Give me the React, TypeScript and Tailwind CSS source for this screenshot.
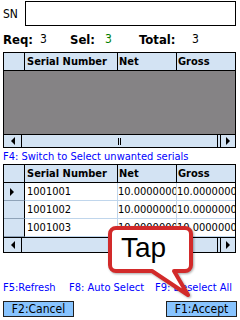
import React from "react";

const F = { fontFamily: '"DejaVu Sans Condensed", "Liberation Sans", Arial, sans-serif' };

function LeftArrow() {
  return (
    <svg width="5" height="8" viewBox="0 0 5 8">
      <polygon points="5,0 5,8 1,4" fill="#000" />
    </svg>
  );
}
function RightArrow() {
  return (
    <svg width="5" height="8" viewBox="0 0 5 8">
      <polygon points="0,0 0,8 4,4" fill="#000" />
    </svg>
  );
}

function ScrollBar({ h, grip }: { h: string; grip: boolean }) {
  return (
    <div className={`flex ${h} border-t border-black bg-[#d3e3f3]`}>
      <div className="w-[18px] border-r border-black flex items-center justify-center">
        <LeftArrow />
      </div>
      <div className="flex-1 flex items-center justify-center border-r border-black">
        {grip && (
          <div className="flex gap-[1px] h-[7px]">
            <div className="w-[1px] bg-black" />
            <div className="w-[1px] bg-black" />
          </div>
        )}
      </div>
      <div className="w-[1px] mr-[1px] bg-[#d3e3f3]" />
      <div className="w-[15px] border-l border-black flex items-center justify-center">
        <RightArrow />
      </div>
    </div>
  );
}

function Header() {
  return (
    <div className="flex h-[18px] bg-[#d3e3f3] border-b border-black text-[11px] font-bold leading-none text-black">
      <div className="w-[21px] border-r border-black" />
      <div className="w-[93px] border-r border-black flex items-center pl-[2px]">Serial Number</div>
      <div className="w-[59px] border-r border-black flex items-center pl-[1px]">Net</div>
      <div className="flex-1 flex items-center pl-[1px]">Gross</div>
    </div>
  );
}

function Row({ sn, sel }: { sn: string; sel?: boolean }) {
  return (
    <div className="flex h-[18px] text-[11px] leading-none text-black">
      <div className="w-[21px] bg-[#d3e3f3] border-r border-black border-b border-b-[#8fa3b8] flex items-center pl-[6px]">
        {sel && <RightArrow />}
      </div>
      <div className="w-[93px] border-r border-[#c0d6ec] border-b flex items-center pl-[2px] overflow-hidden whitespace-nowrap">{sn}</div>
      <div className="w-[59px] border-r border-[#c0d6ec] border-b flex items-center overflow-hidden whitespace-nowrap">10.0000000</div>
      <div className="flex-1 border-b border-[#c0d6ec] flex items-center overflow-hidden whitespace-nowrap">10.0000000</div>
    </div>
  );
}

export default function App() {
  return (
    <div className="relative w-[240px] h-[320px] bg-white overflow-hidden text-black" style={F}>
      <div className="flex items-start h-[26px] pl-[3px]">
        <div className="w-[22px] pt-[8px] text-[12px] leading-none">SN</div>
        <div className="mt-[1px] w-[211px] h-[25px] border border-black bg-white" />
      </div>
      <div className="flex items-center h-[26px] pl-[3px] text-[12px] leading-none">
        <div className="w-[37px] font-bold text-[13px]">Req:</div>
        <div className="w-[30px]">3</div>
        <div className="w-[35px] font-bold text-[13px]">Sel:</div>
        <div className="w-[34px] text-[#008000]">3</div>
        <div className="w-[53px] font-bold text-[13px]">Total:</div>
        <div>3</div>
      </div>
      <div className="ml-[3px] w-[233px] border border-black">
        <Header />
        <div className="h-[63px] bg-[#858385]" />
        <ScrollBar h="h-[13px]" grip />
      </div>
      <div className="h-[16px] pl-[3px] flex items-center text-[11px] leading-none text-[#0000ff] whitespace-nowrap">
        F4: Switch to Select unwanted serials
      </div>
      <div className="ml-[3px] w-[233px] border border-black">
        <Header />
        <Row sn="1001001" sel />
        <Row sn="1001002" />
        <Row sn="1001003" />
        <ScrollBar h="h-[15px]" grip={false} />
      </div>
      <div className="mt-[27px] h-[14px] pl-[3px] flex items-center text-[11px] leading-none text-[#0000ff] whitespace-nowrap">
        <span className="w-[66px]">F5:Refresh</span>
        <span className="w-[86px]">F8: Auto Select</span>
        <span>F9: Deselect All</span>
      </div>
      <div className="mt-[7px] flex justify-between px-[3px]">
        <div className="w-[71px] h-[16px] bg-[#88c4ff] border border-[#202020] flex items-center justify-center text-[12px] leading-none">F2:Cancel</div>
        <div className="w-[71px] h-[16px] bg-[#88c4ff] border border-[#202020] flex items-center justify-center text-[12px] leading-none">F1:Accept</div>
      </div>

      <svg className="absolute left-0 top-0 pointer-events-none" width="240" height="320" viewBox="0 0 240 320">
        <path
          d="M116,228 H185 A6,6 0 0 1 191,234 V265 A6,6 0 0 1 185,271 H174 L188,295 L152,271 H116 A6,6 0 0 1 110,265 V234 A6,6 0 0 1 116,228 Z"
          fill="#fff"
          stroke="#d22a2a"
          strokeWidth="4"
          strokeLinejoin="round"
          style={{ filter: "drop-shadow(1px 1px 1px rgba(0,0,0,0.35))" }}
        />
      </svg>
      <div className="absolute left-[121px] top-[234px] text-[28px] leading-none text-black" style={{ fontFamily: '"Liberation Sans", Arial, sans-serif' }}>Tap</div>
    </div>
  );
}
